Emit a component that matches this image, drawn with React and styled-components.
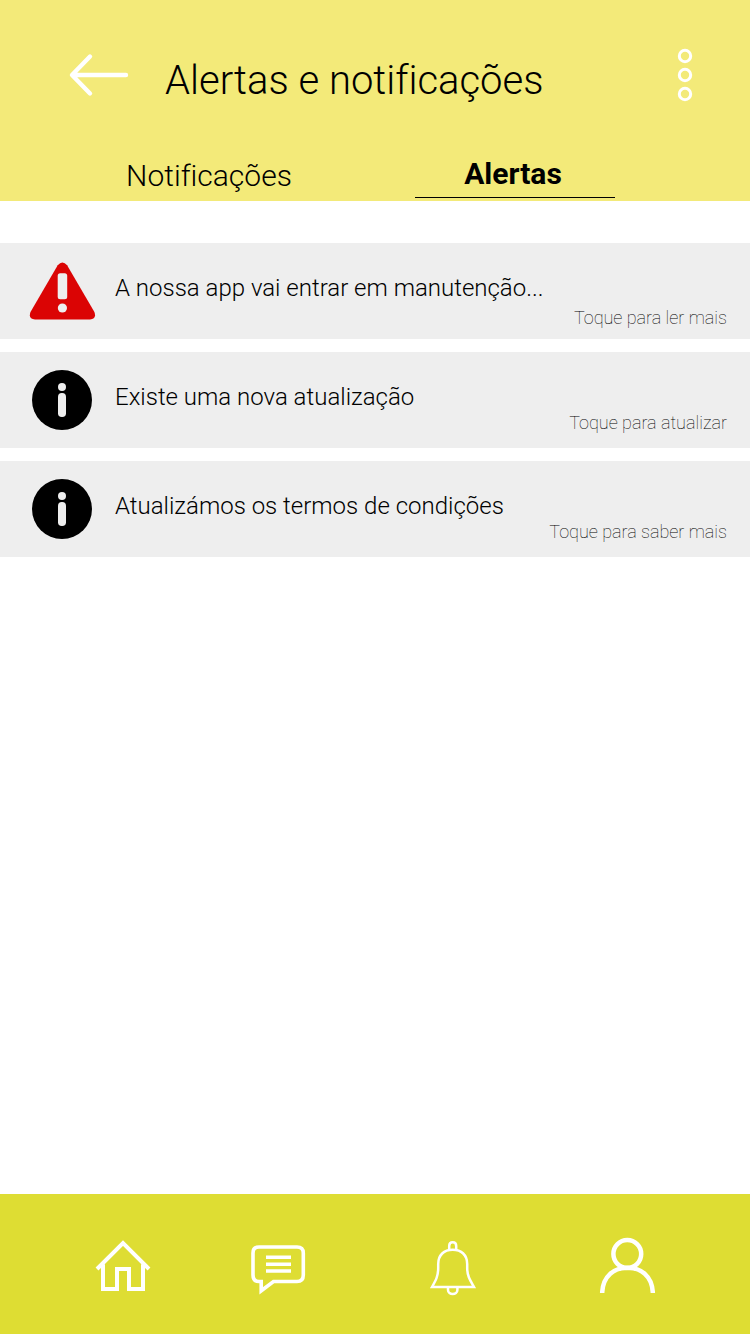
import React from "react";
import styled, { createGlobalStyle } from "styled-components";

const GlobalStyle = createGlobalStyle`
  * { box-sizing: border-box; }
  body { margin: 0; background: #fff; color: #000; font-family: Roboto, "Liberation Sans", sans-serif; font-variant-ligatures: none; }
`;

const Screen = styled.div`
  width: 750px;
  height: 1334px;
  display: flex;
  flex-direction: column;
  background: #fff;
  overflow: hidden;
`;

const Header = styled.header`
  height: 201px;
  background: #f3ea79;
  display: flex;
  flex-direction: column;
`;

const TitleBar = styled.div`
  display: flex;
  align-items: flex-start;
  height: 152px;
  padding: 48px 56px 0 68px;
`;

const IconButton = styled.button`
  display: flex;
  padding: 0;
  border: 0;
  background: none;
  margin-top: ${(p) => p.$top || 0}px;
`;

const Title = styled.h1`
  flex: 1;
  margin: 9px 0 0 35px;
  font-size: 40px;
  line-height: 48px;
  font-weight: 300;
  white-space: nowrap;
`;

const Tabs = styled.nav`
  display: flex;
  align-items: flex-start;
  padding-left: 109px;
`;

const Tab = styled.a`
  width: 200px;
  height: 46px;
  margin-right: 106px;
  padding-top: ${(p) => (p.$active ? 4 : 6)}px;
  padding-right: ${(p) => (p.$active ? 4 : 0)}px;
  border-bottom: 1px solid ${(p) => (p.$active ? "#000" : "transparent")};
  font-size: 30px;
  line-height: 36px;
  font-weight: ${(p) => (p.$active ? 700 : 300)};
  text-align: center;
  white-space: nowrap;
`;

const AlertList = styled.main`
  flex: 1;
  display: flex;
  flex-direction: column;
  gap: 13px;
  padding-top: 42px;
`;

const AlertRow = styled.article`
  display: flex;
  align-items: flex-start;
  height: 96px;
  padding: 18px 23px 0 29px;
  background: #eee;
`;

const AlertBody = styled.div`
  flex: 1;
  display: flex;
  flex-direction: column;
  margin-left: 18px;
`;

const AlertText = styled.p`
  margin: 13px 0 0;
  font-size: 24px;
  line-height: 28px;
  font-weight: 300;
  white-space: nowrap;
`;

const AlertAction = styled.span`
  align-self: flex-end;
  margin-top: ${(p) => p.$gap}px;
  font-size: 18px;
  line-height: 22px;
  font-weight: 100;
  white-space: nowrap;
`;

const BottomBar = styled.nav`
  display: flex;
  align-items: flex-start;
  gap: 113px;
  height: 140px;
  padding: 42px 0 0 92px;
  background: #dedd33;

  & > :nth-child(2) { margin-left: -20px; }
`;

const Glyph = styled.svg`
  display: block;
  fill: none;
  stroke: #fff;
`;

const BackIcon = () => (
  <Glyph width="62" height="48" viewBox="68 50 62 48" strokeWidth="4.4" strokeLinecap="round" strokeLinejoin="round">
    <path d="M90 56.5L72 75L90 93.5M72.5 75H126" />
  </Glyph>
);

const MoreIcon = () => (
  <Glyph width="18" height="56" viewBox="676 48 18 56" strokeWidth="3">
    <circle cx="685" cy="56" r="5.7" />
    <circle cx="685" cy="75" r="5.7" />
    <circle cx="685" cy="94" r="5.7" />
  </Glyph>
);

const WarningIcon = () => (
  <svg width="68" height="60" viewBox="29 261 68 60">
    <path d="M57.7 265.2Q62.4 259.7 67.1 265.2L94.4 312Q96.8 319.2 90 319.4H35Q28 319.2 30.5 312Z" fill="#db0404" />
    <rect x="57.7" y="273.2" width="9.5" height="26" rx="2.5" fill="#eee" />
    <circle cx="62.4" cy="308" r="4.6" fill="#eee" />
  </svg>
);

const InfoIcon = () => (
  <svg width="68" height="60" viewBox="29 370 68 60">
    <circle cx="62" cy="400" r="30" fill="#000" />
    <circle cx="62" cy="387" r="4" fill="#eee" />
    <rect x="58" y="393" width="8" height="24" rx="3.8" fill="#eee" />
  </svg>
);

const HomeIcon = () => (
  <Glyph width="62" height="62" viewBox="92 1236 62 62" strokeWidth="4">
    <path d="M97 1269L123 1243L149 1269M103 1264.5V1289H117V1269H129V1289H143V1264.5" />
  </Glyph>
);

const ChatIcon = () => (
  <Glyph width="62" height="62" viewBox="247 1236 62 62" strokeWidth="3.6">
    <path d="M259 1247H297Q303.3 1247 303.3 1253V1275Q303.3 1281.5 297 1281.5H273.5L261.2 1290.8V1281.5H259Q253 1281.5 253 1275V1253Q253 1247 259 1247Z" />
    <path d="M266 1257.3H291M266 1264.2H291M266 1271H291" />
  </Glyph>
);

const BellIcon = () => (
  <Glyph width="62" height="62" viewBox="422 1236 62 62" strokeWidth="2.5">
    <path d="M449.2 1250V1246Q449.2 1242.3 452.7 1242.3Q456.2 1242.3 456.2 1246V1250" />
    <path d="M432 1287C436 1280 438.2 1276 438.2 1268V1264C438.2 1255 444 1249.8 452.7 1249.8C461.4 1249.8 467.2 1255 467.2 1264V1268C467.2 1276 470 1280 474 1287Z" />
    <path d="M448 1287.5V1290C448 1295.4 457.4 1295.4 457.4 1290V1287.5" />
  </Glyph>
);

const UserIcon = () => (
  <Glyph width="62" height="62" viewBox="597 1236 62 62" strokeWidth="4.5">
    <circle cx="627.3" cy="1254" r="13.9" />
    <path d="M602.2 1293V1292C603.2 1276 614 1267.7 627.5 1267.7S651.8 1276 652.8 1292V1293" />
  </Glyph>
);

const alerts = [
  { icon: WarningIcon, text: "A nossa app vai entrar em manutenção...", action: "Toque para ler mais", gap: 5 },
  { icon: InfoIcon, text: "Existe uma nova atualização", action: "Toque para atualizar", gap: 1 },
  { icon: InfoIcon, text: "Atualizámos os termos de condições", action: "Toque para saber mais", gap: 1 },
];

export default function App() {
  return (
    <Screen>
      <GlobalStyle />
      <Header>
        <TitleBar>
          <IconButton $top={2} aria-label="Voltar"><BackIcon /></IconButton>
          <Title>Alertas e notificações</Title>
          <IconButton aria-label="Mais opções"><MoreIcon /></IconButton>
        </TitleBar>
        <Tabs>
          <Tab>Notificações</Tab>
          <Tab $active>Alertas</Tab>
        </Tabs>
      </Header>
      <AlertList>
        {alerts.map(({ icon: Icon, text, action, gap }) => (
          <AlertRow key={text}>
            <Icon />
            <AlertBody>
              <AlertText>{text}</AlertText>
              <AlertAction $gap={gap}>{action}</AlertAction>
            </AlertBody>
          </AlertRow>
        ))}
      </AlertList>
      <BottomBar>
        <IconButton aria-label="Início"><HomeIcon /></IconButton>
        <IconButton aria-label="Mensagens"><ChatIcon /></IconButton>
        <IconButton aria-label="Alertas"><BellIcon /></IconButton>
        <IconButton aria-label="Perfil"><UserIcon /></IconButton>
      </BottomBar>
    </Screen>
  );
}
